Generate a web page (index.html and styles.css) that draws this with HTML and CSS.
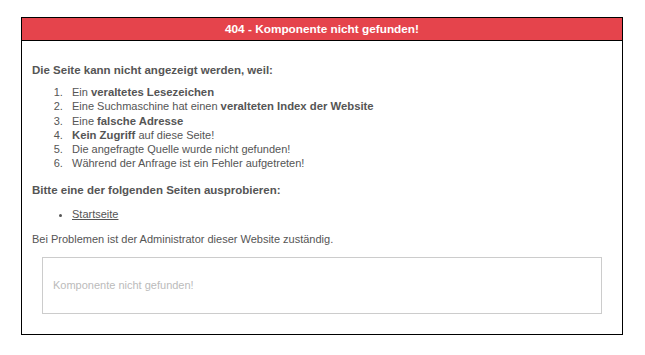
FILE: index.html
```html
<!DOCTYPE html>
<html>
<head>
    <title>404 - Komponente nicht gefunden!</title>
    <link rel="stylesheet" href="styles.css">
</head>
<body>
    <div class="outline">
        <h1 class="title">404 - Komponente nicht gefunden!</h1>
        <div class="content">
            <p class="lead"><strong>Die Seite kann nicht angezeigt werden, weil:</strong></p>
            <ol class="reasons">
                <li>Ein <strong>veraltetes Lesezeichen</strong></li>
                <li>Eine Suchmaschine hat einen <strong>veralteten Index der Website</strong></li>
                <li>Eine <strong>falsche Adresse</strong></li>
                <li><strong>Kein Zugriff</strong> auf diese Seite!</li>
                <li>Die angefragte Quelle wurde nicht gefunden!</li>
                <li>Während der Anfrage ist ein Fehler aufgetreten!</li>
            </ol>
            <p class="lead second"><strong>Bitte eine der folgenden Seiten ausprobieren:</strong></p>
            <ul class="links">
                <li><a href="index.html" title="Zur Startseite wechseln">Startseite</a></li>
            </ul>
            <p class="note">Bei Problemen ist der Administrator dieser Website zuständig.</p>
            <div class="errorbox">
                <p>Komponente nicht gefunden!</p>
            </div>
        </div>
    </div>
</body>
</html>
```

FILE: styles.css
```css
body {
    margin: 0;
    padding-top: 17px;
    background-color: #fff;
    font-family: "Liberation Sans", Arial, sans-serif;
    font-size: 11px;
    line-height: 14px;
    color: #555;
}

.outline {
    width: 600px;
    margin-left: 21px;
    border: 1px solid #000;
}

.title {
    margin: 0;
    height: 22px;
    line-height: 22px;
    background-color: #e5444c;
    border-bottom: 1px solid #000;
    color: #fff;
    font-size: 11.8px;
    font-weight: bold;
    text-align: center;
}

.content {
    padding: 22px 20px 20px 10px;
}

p {
    margin: 0;
}

.lead {
    margin-bottom: 8px;
    font-size: 11.5px;
}

.second {
    margin-bottom: 10px;
}

.reasons {
    margin: 0 0 12px 0;
    padding-left: 40px;
    line-height: 14.3px;
}

.reasons li::marker {
    content: counter(list-item) ".\00a0\00a0\00a0";
}

.reasons strong {
    font-size: 11.3px;
}

.links {
    margin: 0 0 11px 0;
    padding-left: 40px;
}

.links a {
    color: #555;
}

.note {
    margin-bottom: 11px;
}

.errorbox {
    margin-left: 10px;
    height: 55px;
    border: 1px solid #ccc;
    padding: 0 10px;
    color: #bbb;
    display: flex;
    align-items: center;
}
```
